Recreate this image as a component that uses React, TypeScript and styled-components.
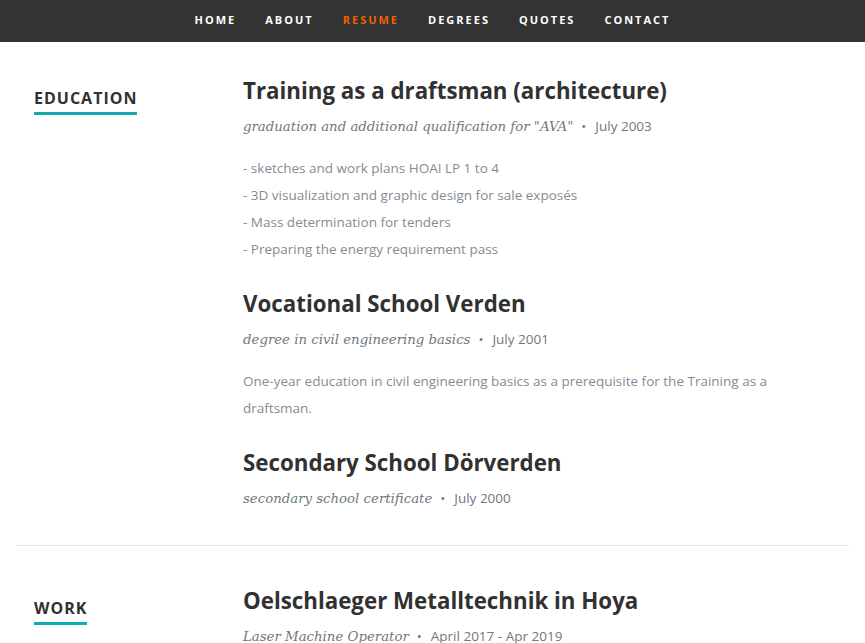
import React from "react";
import styled, { createGlobalStyle } from "styled-components";

const Global = createGlobalStyle`
  html, body { margin: 0; padding: 0; background: #fff; }
  body { font-family: "Open Sans", sans-serif; -webkit-font-smoothing: antialiased; }
  * { box-sizing: border-box; }
`;

const NavBar = styled.nav`
  height: 42px;
  padding-bottom: 2px;
  background: #333333;
  display: flex;
  justify-content: center;
  align-items: center;
`;

const NavList = styled.ul`
  list-style: none;
  margin: 0;
  padding: 0;
  display: flex;
  gap: 3px;
`;

const NavLink = styled.a<{ $active?: boolean }>`
  display: block;
  padding: 0 13px;
  font: 700 11px/40px "Open Sans", sans-serif;
  letter-spacing: 2px;
  text-transform: uppercase;
  color: ${(p) => (p.$active ? "#F06000" : "#ffffff")};
  text-decoration: none;
`;

const Section = styled.section<{ $divider?: boolean }>`
  width: 833px;
  margin: 0 auto;
  display: grid;
  grid-template-columns: 208px 1fr;
  padding-top: 34px;
  padding-bottom: ${(p) => (p.$divider ? "18px" : "0")};
  border-bottom: ${(p) => (p.$divider ? "1px solid #E8E8E8" : "none")};
  margin-bottom: ${(p) => (p.$divider ? "6px" : "0")};
`;

const HeaderCol = styled.div`
  padding-left: 18px;
  padding-top: 10px;
`;

const SectionTitle = styled.h1`
  margin: 0;
  font: 700 16px/24px "Open Sans", sans-serif;
  letter-spacing: 1px;
  text-transform: uppercase;
  color: #313131;
  span {
    display: inline-block;
    border-bottom: 3px solid #11ABB0;
    padding-bottom: 2px;
  }
`;

const MainCol = styled.div`
  padding: 0 18px 0 19px;
`;

const Item = styled.div`
  margin-bottom: 26px;
  &:last-child { margin-bottom: 0; }
`;

const ItemTitle = styled.h3`
  margin: 0;
  font: 700 22.3px/30px "Open Sans", sans-serif;
  color: #313131;
`;

const Info = styled.p`
  margin: 8px 0 16px;
  font: italic 13.3px/24px "DejaVu Serif", serif;
  color: #6E7881;
`;

const Bullet = styled.span`
  margin: 0 9px 0 8px;
  font-style: normal;
  font-family: "Open Sans", sans-serif;
`;

const DateText = styled.em`
  font: normal 13.5px/24px "Open Sans", sans-serif;
  color: #6E7881;
`;

const Body = styled.p`
  margin: 0;
  font: 400 13.5px/27px "Open Sans", sans-serif;
  color: #838C95;
`;

type Entry = { title: string; info: string; date: string; body?: React.ReactNode };

const education: Entry[] = [
  {
    title: "Training as a draftsman (architecture)",
    info: 'graduation and additional qualification for "AVA"',
    date: "July 2003",
    body: (
      <>
        - sketches and work plans HOAI LP 1 to 4<br />
        - 3D visualization and graphic design for sale exposés<br />
        - Mass determination for tenders<br />
        - Preparing the energy requirement pass
      </>
    ),
  },
  {
    title: "Vocational School Verden",
    info: "degree in civil engineering basics",
    date: "July 2001",
    body: "One-year education in civil engineering basics as a prerequisite for the Training as a draftsman.",
  },
  {
    title: "Secondary School Dörverden",
    info: "secondary school certificate",
    date: "July 2000",
  },
];

const work: Entry[] = [
  {
    title: "Oelschlaeger Metalltechnik in Hoya",
    info: "Laser Machine Operator",
    date: "April 2017 - Apr 2019",
  },
];

const EntryView = ({ e }: { e: Entry }) => (
  <Item>
    <ItemTitle>{e.title}</ItemTitle>
    <Info>
      {e.info}
      <Bullet>•</Bullet>
      <DateText>{e.date}</DateText>
    </Info>
    {e.body && <Body>{e.body}</Body>}
  </Item>
);

const navItems = ["Home", "About", "Resume", "Degrees", "Quotes", "Contact"];

export default function App() {
  return (
    <>
      <Global />
      <NavBar>
        <NavList>
          {navItems.map((n) => (
            <li key={n}>
              <NavLink href="#" $active={n === "Resume"}>{n}</NavLink>
            </li>
          ))}
        </NavList>
      </NavBar>
      <Section $divider>
        <HeaderCol>
          <SectionTitle><span>Education</span></SectionTitle>
        </HeaderCol>
        <MainCol>
          {education.map((e) => <EntryView key={e.title} e={e} />)}
        </MainCol>
      </Section>
      <Section>
        <HeaderCol>
          <SectionTitle><span>Work</span></SectionTitle>
        </HeaderCol>
        <MainCol>
          {work.map((e) => <EntryView key={e.title} e={e} />)}
        </MainCol>
      </Section>
    </>
  );
}
